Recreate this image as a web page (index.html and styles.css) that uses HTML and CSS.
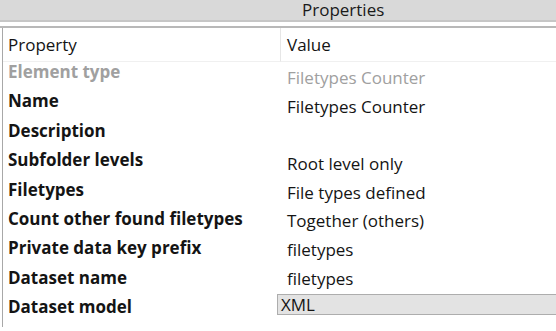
FILE: index.html
```html
<!DOCTYPE html>
<html lang="en">
<head>
    <meta charset="UTF-8">
    <title>Properties</title>
    <link rel="stylesheet" href="styles.css">
</head>
<body>
    <div class="titlebar">
        <span class="title">Properties</span>
    </div>
    <div class="panel">
        <div class="grid">
            <div class="col names">
                <div class="head">Property</div>
                <div class="cell dim">Element type</div>
                <div class="cell">Name</div>
                <div class="cell">Description</div>
                <div class="cell">Subfolder levels</div>
                <div class="cell">Filetypes</div>
                <div class="cell">Count other found filetypes</div>
                <div class="cell">Private data key prefix</div>
                <div class="cell">Dataset name</div>
                <div class="cell">Dataset model</div>
            </div>
            <div class="col values">
                <div class="head">Value</div>
                <div class="cell dim first">Filetypes Counter</div>
                <div class="cell">Filetypes Counter</div>
                <div class="cell"></div>
                <div class="cell">Root level only</div>
                <div class="cell">File types defined</div>
                <div class="cell">Together (others)</div>
                <div class="cell">filetypes</div>
                <div class="cell">filetypes</div>
                <div class="cell selected">XML</div>
            </div>
        </div>
    </div>
</body>
</html>
```
FILE: styles.css
```css
body{
    margin: 0;
    background-color: #fff;
    font-family: 'Open Sans', 'Noto Sans', sans-serif;
    font-size: 17px;
    color: #141414;
    width: 556px;
    height: 331px;
    overflow: hidden;
}
.titlebar{
    height: 20px;
    background-color: #d9d9d9;
    border-bottom: 2px solid #c6c6c6;
    line-height: 20px;
}
.title{
    display: block;
    padding-left: 302px;
    color: #1a1a1a;
}
.panel{
    margin-top: 4px;
    border-top: 2px solid #b8b8b8;
    height: 305px;
}
.grid{
    display: grid;
    grid-template-columns: 281px 1fr;
}
.head{
    height: 33px;
    line-height: 33px;
    border-bottom: 1px solid #f0f0f0;
}
.names{
    margin-left: 2px;
    border-left: 1px solid #a8a8a8;
}
.names .head{
    padding-left: 5px;
    border-right: 1px solid #e6e6e6;
}
.values .head{
    padding-left: 6px;
}
.cell{
    height: 29.4px;
    line-height: 20px;
    white-space: nowrap;
}
.names .cell{
    font-weight: 700;
    padding-left: 5px;
}
.values .cell{
    height: 28.7px;
    padding-left: 6px;
}
.values .first{
    margin-top: 6px;
}
.dim{
    color: #a0a0a0;
}
.values .selected{
    box-sizing: border-box;
    height: 21px;
    line-height: 19px;
    margin-top: -4px;
    margin-left: -4px;
    padding-left: 3px;
    background-color: #e3e3e3;
    border: 1px solid #adadad;
    border-right: none;
}
```
